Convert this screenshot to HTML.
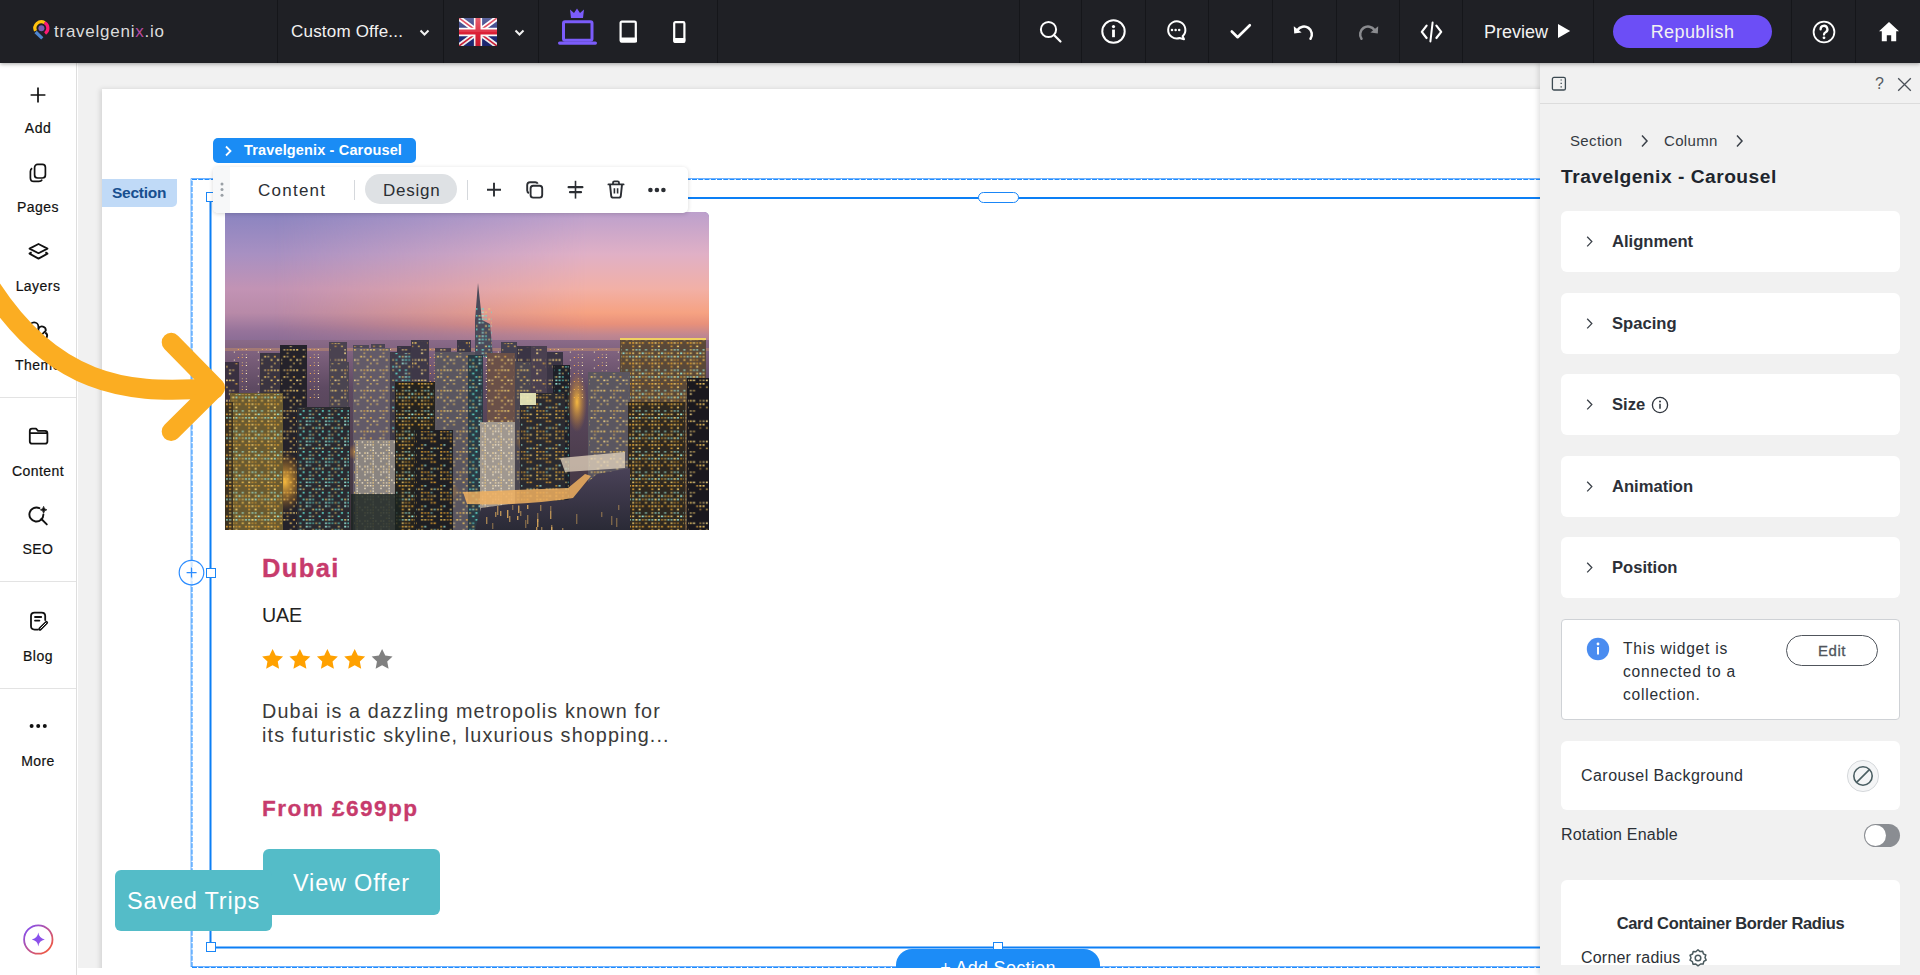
<!DOCTYPE html>
<html><head><meta charset="utf-8">
<style>
*{box-sizing:border-box;margin:0;padding:0}
html,body{width:1920px;height:975px;overflow:hidden;background:#fff;font-family:"Liberation Sans",sans-serif}
.a{position:absolute}
svg{display:block;overflow:visible}
/* topbar */
#top{left:0;top:0;width:1920px;height:63px;background:#1f2025;z-index:10;box-shadow:0 1px 4px rgba(0,0,0,.35)}
#top .sep{top:0;width:1px;height:63px;background:#15161a}
#top .t{color:#f2f2f2;white-space:nowrap}
/* sidebar */
#side{left:0;top:63px;width:77px;height:912px;background:#fff;border-right:1px solid #dedede;z-index:5}
#side .lbl{left:0;width:76px;text-align:center;font-size:14px;color:#111;line-height:16px;white-space:nowrap;letter-spacing:0.45px;-webkit-text-stroke:0.2px #111}
#side .hr{left:0;width:76px;height:1px;background:#e3e3e3}
/* canvas */
#canvas{left:78px;top:63px;width:1462px;height:905px;background:#f1f1f1;overflow:hidden}
#page{left:24px;top:26px;width:1500px;height:900px;background:#fff;box-shadow:-2px 0 5px rgba(0,0,0,.12)}
/* panel */
#panel{left:1540px;top:63px;width:380px;height:912px;background:#f1f1f1;box-shadow:-2px 0 5px rgba(0,0,0,.12);z-index:6}
.card{position:absolute;left:21px;width:339px;background:#fff;border-radius:6px}
.card .ttl{position:absolute;left:51px;font-size:16.6px;font-weight:bold;color:#2c3038;white-space:nowrap;margin-top:1px}
</style></head>
<body>
<!-- TOPBAR -->
<div id="top" class="a">
  <div class="a sep" style="left:277px"></div>
  <div class="a sep" style="left:443px"></div>
  <div class="a sep" style="left:538px"></div>
  <div class="a sep" style="left:717px"></div>
  <div class="a sep" style="left:1019px"></div>
  <div class="a sep" style="left:1081px"></div>
  <div class="a sep" style="left:1145px"></div>
  <div class="a sep" style="left:1208px"></div>
  <div class="a sep" style="left:1272px"></div>
  <div class="a sep" style="left:1336px"></div>
  <div class="a sep" style="left:1399px"></div>
  <div class="a sep" style="left:1462px"></div>
  <div class="a sep" style="left:1593px"></div>
  <div class="a sep" style="left:1791px"></div>
  <div class="a sep" style="left:1855px"></div>

  <svg class="a" style="left:28px;top:15px" width="30" height="30" viewBox="0 0 30 30">
    <path d="M7.5 15.9 A6.5 6.5 0 0 1 16.65 7.6" fill="none" stroke="#ffc20e" stroke-width="3.2"/>
    <path d="M16.65 7.6 A6.5 6.5 0 0 1 17.13 18.52" fill="none" stroke="#ff1a75" stroke-width="3.2"/>
    <path d="M7.6 17 L14.3 23.4" fill="none" stroke="#4f86d0" stroke-width="3.2"/>
    <circle cx="13.4" cy="13.2" r="3" fill="#7a5cb8"/>
  </svg>
  <div class="a t" style="left:54px;top:22px;font-size:17px;line-height:20px;letter-spacing:0.75px;color:#dcdcdc">travelgeni<span style="color:#b94aa0">x</span>.io</div>
  <div class="a t" style="left:291px;top:22px;font-size:17px;line-height:20px;letter-spacing:0.2px">Custom Offe...</div>
  <svg class="a" style="left:419px;top:29px" width="11" height="8" viewBox="0 0 11 8"><path d="M1.5 1.5 L5.5 5.5 L9.5 1.5" fill="none" stroke="#f2f2f2" stroke-width="2"/></svg>
  <svg class="a" style="left:459px;top:18px;overflow:hidden" width="38" height="28" viewBox="0 0 60 44" preserveAspectRatio="none">
    <defs><linearGradient id="fg" x1="0" y1="0" x2="0" y2="1"><stop offset="0" stop-color="#fff" stop-opacity=".28"/><stop offset=".5" stop-color="#fff" stop-opacity=".1"/><stop offset=".5" stop-color="#000" stop-opacity="0"/><stop offset="1" stop-color="#000" stop-opacity=".1"/></linearGradient></defs>
    <rect width="60" height="44" fill="#1f2a7a"/>
    <path d="M0 0 L60 44 M60 0 L0 44" stroke="#fff" stroke-width="8"/>
    <path d="M0 0 L60 44 M60 0 L0 44" stroke="#d9233c" stroke-width="2.6"/>
    <path d="M30 0 V44 M0 22 H60" stroke="#fff" stroke-width="13"/>
    <path d="M30 0 V44 M0 22 H60" stroke="#dd1f36" stroke-width="8"/>
    <rect width="60" height="44" fill="url(#fg)"/>
  </svg>
  <svg class="a" style="left:514px;top:29px" width="11" height="8" viewBox="0 0 11 8"><path d="M1.5 1.5 L5.5 5.5 L9.5 1.5" fill="none" stroke="#f2f2f2" stroke-width="2"/></svg>
  <!-- laptop -->
  <svg class="a" style="left:556px;top:8px" width="42" height="38" viewBox="0 0 42 38">
    <path d="M15 10 L14 1.5 L18 5 L21 0.5 L24 5 L28 1.5 L27 10 Z" fill="#7b5cfa"/>
    <rect x="7.5" y="13.8" width="28.5" height="18.5" rx="1.5" fill="none" stroke="#7b5cfa" stroke-width="3"/>
    <rect x="2" y="33.5" width="39" height="3.2" rx="1.6" fill="#7b5cfa"/>
  </svg>
  <!-- tablet -->
  <svg class="a" style="left:619px;top:20px" width="19" height="24" viewBox="0 0 19 24">
    <rect x="1.6" y="1.6" width="15.2" height="19.8" rx="1.2" fill="none" stroke="#fff" stroke-width="2.2"/>
    <rect x="1" y="17.5" width="17" height="5" rx="1" fill="#fff"/>
  </svg>
  <!-- phone -->
  <svg class="a" style="left:673px;top:21px" width="13" height="23" viewBox="0 0 13 23">
    <rect x="1.2" y="1.2" width="10.2" height="19.6" rx="1.2" fill="none" stroke="#fff" stroke-width="2.2"/>
    <rect x="0.5" y="17" width="11.8" height="4.8" rx="1" fill="#fff"/>
  </svg>
  <!-- search -->
  <svg class="a" style="left:1039px;top:20px" width="24" height="24" viewBox="0 0 24 24">
    <circle cx="9.5" cy="9.5" r="7.6" fill="none" stroke="#fff" stroke-width="2"/>
    <path d="M15 15 L21.5 21.5" stroke="#fff" stroke-width="2.2" stroke-linecap="round"/>
  </svg>
  <!-- info -->
  <svg class="a" style="left:1101px;top:19px" width="25" height="25" viewBox="0 0 25 25">
    <circle cx="12.5" cy="12.5" r="11.2" fill="none" stroke="#fff" stroke-width="2"/>
    <circle cx="12.5" cy="7.6" r="1.6" fill="#fff"/>
    <rect x="11.1" y="10.6" width="2.8" height="7.6" fill="#fff"/>
  </svg>
  <!-- comment -->
  <svg class="a" style="left:1165px;top:20px" width="22" height="22" viewBox="0 0 22 22">
    <path d="M17.6 16.2 A8.6 8.6 0 1 0 14.6 18 L19 19.2 Z" fill="none" stroke="#fff" stroke-width="2" stroke-linejoin="round"/>
    <circle cx="7" cy="10" r="1.25" fill="#fff"/><circle cx="10.6" cy="10" r="1.25" fill="#fff"/><circle cx="14.2" cy="10" r="1.25" fill="#fff"/>
  </svg>
  <!-- check -->
  <svg class="a" style="left:1230px;top:23px" width="22" height="17" viewBox="0 0 22 17">
    <path d="M1.8 8.5 L7.6 14.2 L19.8 2.2" fill="none" stroke="#fff" stroke-width="2.6" stroke-linecap="round" stroke-linejoin="round"/>
  </svg>
  <!-- undo -->
  <svg class="a" style="left:1293px;top:22px" width="22" height="19" viewBox="0 0 22 19">
    <path d="M4.5 8 A7.5 7.5 0 1 1 17.5 16.8" fill="none" stroke="#fff" stroke-width="2.5" stroke-linecap="round"/>
    <path d="M0.8 4.2 L1.2 11.6 L8.6 10.4 Z" fill="#fff"/>
  </svg>
  <!-- redo -->
  <svg class="a" style="left:1357px;top:22px" width="22" height="19" viewBox="0 0 22 19">
    <path d="M17.5 8 A7.5 7.5 0 1 0 4.5 16.8" fill="none" stroke="#8a8b8f" stroke-width="2.5" stroke-linecap="round"/>
    <path d="M21.2 4.2 L20.8 11.6 L13.4 10.4 Z" fill="#8a8b8f"/>
  </svg>
  <!-- code -->
  <svg class="a" style="left:1420px;top:21px" width="23" height="22" viewBox="0 0 23 22">
    <path d="M6.6 4.6 L1.8 10.8 L6.6 17" fill="none" stroke="#fff" stroke-width="2.2" stroke-linecap="round" stroke-linejoin="round"/>
    <path d="M16.4 4.6 L21.2 10.8 L16.4 17" fill="none" stroke="#fff" stroke-width="2.2" stroke-linecap="round" stroke-linejoin="round"/>
    <path d="M12.6 1.6 L10.4 20.4" stroke="#fff" stroke-width="2" stroke-linecap="round"/>
  </svg>
  <div class="a t" style="left:1484px;top:21px;font-size:18px;line-height:22px;letter-spacing:0px">Preview</div>
  <svg class="a" style="left:1557px;top:23px" width="14" height="16" viewBox="0 0 14 16"><path d="M1 1 L13.2 8 L1 15 Z" fill="#fff"/></svg>
  <div class="a" style="left:1613px;top:15px;width:159px;height:33px;border-radius:17px;background:#6c4ef6"></div>
  <div class="a t" style="left:1613px;top:21px;width:159px;text-align:center;font-size:18px;line-height:22px;letter-spacing:0.4px">Republish</div>
  <!-- help -->
  <svg class="a" style="left:1812px;top:20px" width="24" height="24" viewBox="0 0 24 24">
    <circle cx="12" cy="12" r="10.4" fill="none" stroke="#fff" stroke-width="1.8"/>
    <path d="M8.6 9.4 A3.4 3.4 0 1 1 13.6 12.2 Q12 13 12 14.6" fill="none" stroke="#fff" stroke-width="2.3" stroke-linecap="round"/>
    <circle cx="12" cy="17.8" r="1.4" fill="#fff"/>
  </svg>
  <!-- home -->
  <svg class="a" style="left:1878px;top:21px" width="22" height="21" viewBox="0 0 22 21">
    <path d="M11 1 L21 10.2 L18.2 10.2 L18.2 20.2 L13.2 20.2 L13.2 14.2 L8.8 14.2 L8.8 20.2 L3.8 20.2 L3.8 10.2 L1 10.2 Z" fill="#fff"/>
  </svg>
</div>

<!-- SIDEBAR -->
<div id="side" class="a">

  <svg class="a" style="left:30px;top:24px" width="16" height="16" viewBox="0 0 16 16"><path d="M8 0.6 V15.4 M0.6 8 H15.4" stroke="#111" stroke-width="1.7"/></svg>
  <div class="a lbl" style="top:57px">Add</div>
  <svg class="a" style="left:29px;top:100px" width="19" height="20" viewBox="0 0 19 20">
    <rect x="5.6" y="1.4" width="10.8" height="13.6" rx="3" fill="none" stroke="#111" stroke-width="1.7"/>
    <path d="M3.2 5.2 Q1.4 6 1.4 8.4 V15 Q1.4 18.4 4.8 18.4 H9.8 Q12.2 18.4 13.2 16.6" fill="none" stroke="#111" stroke-width="1.7"/>
  </svg>
  <div class="a lbl" style="top:136px">Pages</div>
  <svg class="a" style="left:28px;top:180px" width="21" height="17" viewBox="0 0 21 17">
    <path d="M10.5 1 L19.5 5.6 L10.5 10.2 L1.5 5.6 Z" fill="none" stroke="#111" stroke-width="1.8" stroke-linejoin="round"/>
    <path d="M3.6 9.2 L1.5 10.6 L10.5 15.6 L19.5 10.6 L17.4 9.2" fill="none" stroke="#111" stroke-width="1.8" stroke-linejoin="round"/>
  </svg>
  <div class="a lbl" style="top:215px">Layers</div>
  <svg class="a" style="left:28px;top:258px" width="22" height="22" viewBox="0 0 22 22">
    <path d="M1.8 14 V5.6 A4.3 4.3 0 0 1 10.4 5.6 V14.4" fill="none" stroke="#111" stroke-width="1.8"/>
    <path d="M10.4 7.6 A3.9 3.9 0 0 1 17.8 9.6 L11 16.4" fill="none" stroke="#111" stroke-width="1.8" stroke-linejoin="round"/>
    <path d="M17.2 11.6 A3.6 3.6 0 0 1 14.4 18.2 L12.4 17" fill="none" stroke="#111" stroke-width="1.8"/>
  </svg>
  <div class="a lbl" style="top:294px">Theme</div>
  <div class="a hr" style="top:334px"></div>
  <svg class="a" style="left:28px;top:364px" width="21" height="18" viewBox="0 0 21 18">
    <path d="M1.8 4 Q1.8 1.6 4 1.6 H8 L10 3.8 H17 Q19.4 3.8 19.4 6.2 V14.4 Q19.4 16.6 17 16.6 H4.2 Q1.8 16.6 1.8 14.4 Z M1.8 6.2 H19.4" fill="none" stroke="#111" stroke-width="1.8" stroke-linejoin="round"/>
  </svg>
  <div class="a lbl" style="top:400px">Content</div>
  <svg class="a" style="left:28px;top:442px" width="21" height="21" viewBox="0 0 21 21">
    <path d="M11.4 3.2 A7 7 0 1 0 15.4 9.4" fill="none" stroke="#111" stroke-width="1.9" stroke-linecap="round"/>
    <path d="M13.4 14 L18.8 19.4" stroke="#111" stroke-width="1.9" stroke-linecap="round"/>
    <path d="M15.6 1.4 Q16 4.4 18.8 4.8 Q16 5.2 15.6 8.2 Q15.2 5.2 12.4 4.8 Q15.2 4.4 15.6 1.4 Z" fill="#111" stroke="#111" stroke-width="0.8" stroke-linejoin="round"/>
  </svg>
  <div class="a lbl" style="top:478px">SEO</div>
  <div class="a hr" style="top:518px"></div>
  <svg class="a" style="left:29px;top:548px" width="20" height="20" viewBox="0 0 20 20">
    <path d="M9 18.6 H5.6 Q2 18.6 2 15 V5 Q2 1.6 5.6 1.6 H12.6 Q16.2 1.6 16.2 5 V9" fill="none" stroke="#111" stroke-width="1.8" stroke-linecap="round"/>
    <path d="M6 6 H12.2 M6 9.6 H10.4" stroke="#111" stroke-width="1.8" stroke-linecap="round"/>
    <path d="M11 18 L17.4 11.6" stroke="#111" stroke-width="3.4" stroke-linecap="round"/>
    <path d="M11.6 17.4 L17 12" stroke="#fff" stroke-width="1" stroke-linecap="round"/>
  </svg>
  <div class="a lbl" style="top:585px">Blog</div>
  <div class="a hr" style="top:625px"></div>
  <svg class="a" style="left:29px;top:660px" width="19" height="6" viewBox="0 0 19 6"><circle cx="2.6" cy="3" r="2" fill="#111"/><circle cx="9.2" cy="3" r="2" fill="#111"/><circle cx="15.8" cy="3" r="2" fill="#111"/></svg>
  <div class="a lbl" style="top:690px">More</div>
  <svg class="a" style="left:22px;top:860px" width="33" height="33" viewBox="0 0 33 33">
    <defs><linearGradient id="aig" x1="0" y1="0" x2="1" y2="1"><stop offset="0" stop-color="#7a4dff"/><stop offset="1" stop-color="#ff5a2a"/></linearGradient>
    <linearGradient id="aig2" x1="0" y1="0" x2="1" y2="1"><stop offset="0" stop-color="#7b4cf5"/><stop offset="1" stop-color="#9a55e0"/></linearGradient></defs>
    <circle cx="16.3" cy="16.5" r="14.2" fill="none" stroke="url(#aig)" stroke-width="1.8"/>
    <path d="M16.3 9.6 Q17 15.2 22.8 16.5 Q17 17.8 16.3 23.4 Q15.6 17.8 9.8 16.5 Q15.6 15.2 16.3 9.6 Z" fill="url(#aig2)"/>
  </svg>
</div>

<!-- CANVAS -->
<div id="canvas" class="a">
  <div id="page" class="a"></div>
</div>
<div class="a" style="left:78px;top:968px;width:1462px;height:7px;background:#fff"></div>


<!-- CANVAS OVERLAY -->
<div class="a" id="cvo" style="left:0;top:0;width:1920px;height:975px;clip-path:inset(63px 380px 7px 78px);z-index:3">
  <!-- section label -->
  <div class="a" style="left:102px;top:179px;width:75px;height:28px;background:#c0daf7;border-radius:0 0 5px 0"></div>
  <div class="a" style="left:112px;top:184px;font-size:15.5px;line-height:18px;font-weight:bold;color:#174f8f;letter-spacing:-0.25px">Section</div>
  <!-- dashed outer rect -->
  <svg class="a" style="left:0;top:0" width="1920" height="975">
    <path d="M191 967 V178.5 H1600 M191 966.5 H1600" fill="none" stroke="#6fb2ff" stroke-width="1"/>
    <path d="M192 967 V179.5 H1600 M192 967.5 H1600" fill="none" stroke="#1f8cff" stroke-width="1" stroke-dasharray="5 1.25"/>
    <path d="M210.5 947.6 V197.9 H1600 M210.5 947.6 H1600" fill="none" stroke="#0c7ff5" stroke-width="2"/>
  </svg>
  <!-- blue tag -->
  <div class="a" style="left:213px;top:138px;width:203px;height:25px;background:#1a8cf5;border-radius:5px"></div>
  <svg class="a" style="left:224px;top:145px" width="9" height="12" viewBox="0 0 9 12"><path d="M2 1.5 L6.5 6 L2 10.5" fill="none" stroke="#fff" stroke-width="1.8"/></svg>
  <div class="a" style="left:244px;top:141px;font-size:14.5px;line-height:18px;font-weight:bold;color:#fff;letter-spacing:0.15px;white-space:nowrap">Travelgenix - Carousel</div>
  <!-- image -->
  <div class="a" id="img" style="left:225px;top:212px;width:484px;height:318px;overflow:hidden;border-radius:0 5px 0 0"><svg width="484" height="318" viewBox="0 0 484 318" style="display:block"><defs><linearGradient id="skyL" x1="0" y1="0" x2="0" y2="1">
<stop offset="0" stop-color="#8a84c0"/><stop offset="0.3" stop-color="#a890c2"/><stop offset="0.55" stop-color="#c293b4"/><stop offset="0.72" stop-color="#b88aa8"/><stop offset="0.85" stop-color="#96739a"/><stop offset="1" stop-color="#7e6690"/></linearGradient>
<linearGradient id="skyR" x1="0" y1="0" x2="0" y2="1">
<stop offset="0" stop-color="#bca0cc"/><stop offset="0.3" stop-color="#e0b0c6"/><stop offset="0.55" stop-color="#f2b0a6"/><stop offset="0.72" stop-color="#f6a282"/><stop offset="0.8" stop-color="#e8907a"/><stop offset="0.88" stop-color="#c08690"/><stop offset="1" stop-color="#a07890"/></linearGradient>
<linearGradient id="hmask" x1="0" y1="0" x2="1" y2="0"><stop offset="0.1" stop-color="#fff" stop-opacity="0"/><stop offset="0.75" stop-color="#fff" stop-opacity="1"/></linearGradient>
<mask id="skymask"><rect width="484" height="140" fill="url(#hmask)"/></mask>
<linearGradient id="haze" x1="0" y1="0" x2="0" y2="1"><stop offset="0" stop-color="#8a6a88"/><stop offset="0.25" stop-color="#5e4a62"/><stop offset="1" stop-color="#3a3038"/></linearGradient>
<linearGradient id="water" x1="0" y1="0" x2="0" y2="1"><stop offset="0" stop-color="#4a4258"/><stop offset="1" stop-color="#2a2a36"/></linearGradient>
<radialGradient id="street" cx="0.5" cy="0.5" r="0.5"><stop offset="0" stop-color="#ffc040" stop-opacity="0.95"/><stop offset="1" stop-color="#d08020" stop-opacity="0"/></radialGradient><pattern id="pA" width="19.2" height="20.4" patternUnits="userSpaceOnUse"><rect x="0.8" y="4.4" width="2" height="1.6" fill="#f5d888" opacity="0.90"/><rect x="4.0" y="4.4" width="2" height="1.6" fill="#e8c060" opacity="0.96"/><rect x="7.2" y="4.4" width="2" height="1.6" fill="#f5d888" opacity="0.94"/><rect x="13.6" y="4.4" width="2" height="1.6" fill="#e8c060" opacity="0.56"/><rect x="16.8" y="4.4" width="2" height="1.6" fill="#f5d888" opacity="0.63"/><rect x="10.4" y="7.8" width="2" height="1.6" fill="#d8a040" opacity="0.83"/><rect x="13.6" y="7.8" width="2" height="1.6" fill="#e8c060" opacity="0.99"/><rect x="16.8" y="7.8" width="2" height="1.6" fill="#e8c060" opacity="0.98"/><rect x="0.8" y="11.2" width="2" height="1.6" fill="#e8c060" opacity="0.68"/><rect x="13.6" y="11.2" width="2" height="1.6" fill="#d8a040" opacity="0.64"/><rect x="4.0" y="14.6" width="2" height="1.6" fill="#f5d888" opacity="0.62"/><rect x="7.2" y="14.6" width="2" height="1.6" fill="#e8c060" opacity="0.70"/><rect x="4.0" y="18.0" width="2" height="1.6" fill="#f5d888" opacity="0.92"/></pattern><pattern id="pB" width="19.2" height="20.4" patternUnits="userSpaceOnUse"><rect x="0.8" y="1.0" width="2" height="1.6" fill="#e8c060" opacity="0.98"/><rect x="4.0" y="1.0" width="2" height="1.6" fill="#f5d888" opacity="0.56"/><rect x="10.4" y="1.0" width="2" height="1.6" fill="#d8a040" opacity="0.93"/><rect x="7.2" y="4.4" width="2" height="1.6" fill="#e8c060" opacity="0.97"/><rect x="13.6" y="4.4" width="2" height="1.6" fill="#f5d888" opacity="0.95"/><rect x="16.8" y="4.4" width="2" height="1.6" fill="#f5d888" opacity="0.60"/><rect x="10.4" y="7.8" width="2" height="1.6" fill="#e8c060" opacity="0.64"/><rect x="16.8" y="7.8" width="2" height="1.6" fill="#e8c060" opacity="0.70"/><rect x="7.2" y="11.2" width="2" height="1.6" fill="#f5d888" opacity="0.69"/><rect x="0.8" y="14.6" width="2" height="1.6" fill="#f5d888" opacity="0.62"/><rect x="4.0" y="14.6" width="2" height="1.6" fill="#d8a040" opacity="0.79"/><rect x="7.2" y="14.6" width="2" height="1.6" fill="#e8c060" opacity="0.88"/><rect x="10.4" y="14.6" width="2" height="1.6" fill="#f5d888" opacity="0.76"/><rect x="13.6" y="14.6" width="2" height="1.6" fill="#e8c060" opacity="0.99"/><rect x="4.0" y="18.0" width="2" height="1.6" fill="#e8c060" opacity="0.61"/></pattern><pattern id="pC" width="19.2" height="20.4" patternUnits="userSpaceOnUse"><rect x="0.8" y="1.0" width="2" height="1.6" fill="#a0f0e0" opacity="0.72"/><rect x="4.0" y="1.0" width="2" height="1.6" fill="#a0f0e0" opacity="0.68"/><rect x="7.2" y="1.0" width="2" height="1.6" fill="#ffd870" opacity="0.99"/><rect x="10.4" y="1.0" width="2" height="1.6" fill="#a0f0e0" opacity="0.86"/><rect x="13.6" y="1.0" width="2" height="1.6" fill="#e0a030" opacity="0.68"/><rect x="16.8" y="1.0" width="2" height="1.6" fill="#ffd870" opacity="0.60"/><rect x="4.0" y="4.4" width="2" height="1.6" fill="#ffd870" opacity="0.83"/><rect x="7.2" y="4.4" width="2" height="1.6" fill="#e0a030" opacity="0.63"/><rect x="10.4" y="4.4" width="2" height="1.6" fill="#e0a030" opacity="0.58"/><rect x="16.8" y="4.4" width="2" height="1.6" fill="#f0c050" opacity="0.89"/><rect x="0.8" y="7.8" width="2" height="1.6" fill="#e0a030" opacity="0.93"/><rect x="4.0" y="7.8" width="2" height="1.6" fill="#e0a030" opacity="0.98"/><rect x="7.2" y="7.8" width="2" height="1.6" fill="#ffd870" opacity="0.81"/><rect x="10.4" y="7.8" width="2" height="1.6" fill="#e0a030" opacity="0.70"/><rect x="13.6" y="7.8" width="2" height="1.6" fill="#e0a030" opacity="0.92"/><rect x="4.0" y="11.2" width="2" height="1.6" fill="#e0a030" opacity="0.88"/><rect x="10.4" y="11.2" width="2" height="1.6" fill="#ffd870" opacity="0.94"/><rect x="4.0" y="14.6" width="2" height="1.6" fill="#ffd870" opacity="0.64"/><rect x="7.2" y="14.6" width="2" height="1.6" fill="#a0f0e0" opacity="0.68"/><rect x="10.4" y="14.6" width="2" height="1.6" fill="#a0f0e0" opacity="0.63"/><rect x="16.8" y="14.6" width="2" height="1.6" fill="#a0f0e0" opacity="0.69"/><rect x="0.8" y="18.0" width="2" height="1.6" fill="#e0a030" opacity="0.87"/><rect x="4.0" y="18.0" width="2" height="1.6" fill="#ffd870" opacity="0.81"/><rect x="10.4" y="18.0" width="2" height="1.6" fill="#ffd870" opacity="0.83"/><rect x="13.6" y="18.0" width="2" height="1.6" fill="#a0f0e0" opacity="0.99"/><rect x="16.8" y="18.0" width="2" height="1.6" fill="#ffd870" opacity="0.60"/></pattern><pattern id="pD" width="19.2" height="20.4" patternUnits="userSpaceOnUse"><rect x="4.0" y="1.0" width="2" height="1.6" fill="#f0c050" opacity="0.74"/><rect x="7.2" y="1.0" width="2" height="1.6" fill="#f0c050" opacity="0.82"/><rect x="10.4" y="1.0" width="2" height="1.6" fill="#e0a030" opacity="0.55"/><rect x="13.6" y="1.0" width="2" height="1.6" fill="#e0a030" opacity="0.94"/><rect x="13.6" y="4.4" width="2" height="1.6" fill="#e0a030" opacity="0.80"/><rect x="16.8" y="4.4" width="2" height="1.6" fill="#e0a030" opacity="0.98"/><rect x="4.0" y="7.8" width="2" height="1.6" fill="#e0a030" opacity="0.76"/><rect x="7.2" y="7.8" width="2" height="1.6" fill="#a0f0e0" opacity="0.80"/><rect x="0.8" y="11.2" width="2" height="1.6" fill="#f0c050" opacity="0.72"/><rect x="4.0" y="11.2" width="2" height="1.6" fill="#ffd870" opacity="0.70"/><rect x="13.6" y="11.2" width="2" height="1.6" fill="#ffd870" opacity="0.77"/><rect x="16.8" y="11.2" width="2" height="1.6" fill="#a0f0e0" opacity="0.72"/><rect x="4.0" y="14.6" width="2" height="1.6" fill="#e0a030" opacity="0.88"/><rect x="7.2" y="14.6" width="2" height="1.6" fill="#e0a030" opacity="0.74"/><rect x="10.4" y="14.6" width="2" height="1.6" fill="#e0a030" opacity="0.77"/><rect x="13.6" y="14.6" width="2" height="1.6" fill="#a0f0e0" opacity="0.56"/><rect x="4.0" y="18.0" width="2" height="1.6" fill="#f0c050" opacity="0.90"/><rect x="10.4" y="18.0" width="2" height="1.6" fill="#e0a030" opacity="0.66"/><rect x="13.6" y="18.0" width="2" height="1.6" fill="#f0c050" opacity="0.66"/><rect x="16.8" y="18.0" width="2" height="1.6" fill="#ffd870" opacity="0.87"/></pattern><pattern id="pE" width="16" height="13.6" patternUnits="userSpaceOnUse"><rect x="0.8" y="1.0" width="1.6" height="1.4" fill="#fff0d0" opacity="0.82"/><rect x="3.4" y="1.0" width="1.6" height="1.4" fill="#e0c080" opacity="0.94"/><rect x="11.2" y="1.0" width="1.6" height="1.4" fill="#ffe0a0" opacity="0.69"/><rect x="13.8" y="1.0" width="1.6" height="1.4" fill="#fff0d0" opacity="0.83"/><rect x="3.4" y="3.7" width="1.6" height="1.4" fill="#fff0d0" opacity="0.71"/><rect x="11.2" y="3.7" width="1.6" height="1.4" fill="#fff0d0" opacity="0.80"/><rect x="0.8" y="6.4" width="1.6" height="1.4" fill="#e0c080" opacity="0.80"/><rect x="3.4" y="6.4" width="1.6" height="1.4" fill="#fff0d0" opacity="0.82"/><rect x="3.4" y="9.1" width="1.6" height="1.4" fill="#e0c080" opacity="0.93"/><rect x="6.0" y="9.1" width="1.6" height="1.4" fill="#fff0d0" opacity="0.76"/><rect x="11.2" y="9.1" width="1.6" height="1.4" fill="#ffe0a0" opacity="0.86"/><rect x="13.8" y="9.1" width="1.6" height="1.4" fill="#fff0d0" opacity="0.84"/><rect x="0.8" y="11.8" width="1.6" height="1.4" fill="#fff0d0" opacity="0.61"/><rect x="3.4" y="11.8" width="1.6" height="1.4" fill="#e0c080" opacity="0.95"/><rect x="8.6" y="11.8" width="1.6" height="1.4" fill="#fff0d0" opacity="0.81"/><rect x="13.8" y="11.8" width="1.6" height="1.4" fill="#ffe0a0" opacity="0.67"/></pattern><pattern id="pT" width="19.2" height="20.4" patternUnits="userSpaceOnUse"><rect x="0.8" y="1.0" width="2" height="1.6" fill="#60e0d0" opacity="0.85"/><rect x="4.0" y="1.0" width="2" height="1.6" fill="#f0d070" opacity="0.74"/><rect x="7.2" y="1.0" width="2" height="1.6" fill="#a0f0e0" opacity="0.87"/><rect x="10.4" y="1.0" width="2" height="1.6" fill="#60e0d0" opacity="0.65"/><rect x="4.0" y="4.4" width="2" height="1.6" fill="#a0f0e0" opacity="0.87"/><rect x="7.2" y="4.4" width="2" height="1.6" fill="#60e0d0" opacity="0.82"/><rect x="10.4" y="4.4" width="2" height="1.6" fill="#60e0d0" opacity="0.58"/><rect x="13.6" y="4.4" width="2" height="1.6" fill="#f0d070" opacity="0.60"/><rect x="16.8" y="4.4" width="2" height="1.6" fill="#60e0d0" opacity="0.68"/><rect x="4.0" y="7.8" width="2" height="1.6" fill="#a0f0e0" opacity="0.95"/><rect x="7.2" y="7.8" width="2" height="1.6" fill="#a0f0e0" opacity="0.59"/><rect x="16.8" y="7.8" width="2" height="1.6" fill="#f0d070" opacity="0.72"/><rect x="0.8" y="11.2" width="2" height="1.6" fill="#f0d070" opacity="0.68"/><rect x="10.4" y="11.2" width="2" height="1.6" fill="#f0d070" opacity="0.80"/><rect x="13.6" y="11.2" width="2" height="1.6" fill="#60e0d0" opacity="0.80"/><rect x="16.8" y="11.2" width="2" height="1.6" fill="#a0f0e0" opacity="0.78"/><rect x="0.8" y="14.6" width="2" height="1.6" fill="#60e0d0" opacity="0.94"/><rect x="7.2" y="14.6" width="2" height="1.6" fill="#60e0d0" opacity="0.87"/><rect x="13.6" y="14.6" width="2" height="1.6" fill="#f0d070" opacity="0.57"/><rect x="7.2" y="18.0" width="2" height="1.6" fill="#a0f0e0" opacity="0.77"/><rect x="10.4" y="18.0" width="2" height="1.6" fill="#f0d070" opacity="0.56"/><rect x="16.8" y="18.0" width="2" height="1.6" fill="#60e0d0" opacity="0.98"/></pattern><pattern id="pDist" width="24" height="8" patternUnits="userSpaceOnUse"><rect x="12.8" y="1.0" width="1.2" height="1" fill="#ffb050" opacity="0.92"/><rect x="16.8" y="1.0" width="1.2" height="1" fill="#ffb050" opacity="0.71"/><rect x="20.8" y="1.0" width="1.2" height="1" fill="#fff0c0" opacity="0.97"/><rect x="8.8" y="3.6" width="1.2" height="1" fill="#fff0c0" opacity="0.84"/><rect x="16.8" y="6.2" width="1.2" height="1" fill="#f5d27a" opacity="0.57"/><rect x="20.8" y="6.2" width="1.2" height="1" fill="#ffe39a" opacity="0.57"/></pattern></defs><rect width="484" height="140" fill="url(#skyL)"/><rect width="484" height="140" fill="url(#skyR)" mask="url(#skymask)"/><rect y="128" width="484" height="190" fill="url(#haze)"/><rect y="136" width="484" height="50" fill="url(#pDist)"/><rect x="0" y="136" width="484" height="3" fill="#e0a060" opacity="0.35"/><rect x="104" y="130" width="18" height="188" fill="#4a4250"/><rect x="105" y="131" width="16" height="187" fill="url(#pA)"/><rect x="128" y="133" width="16" height="185" fill="#4e4858"/><rect x="129" y="134" width="14" height="184" fill="url(#pA)"/><rect x="146" y="132" width="14" height="186" fill="#4a4454"/><rect x="147" y="133" width="12" height="185" fill="url(#pA)"/><rect x="172" y="134" width="14" height="184" fill="#3a3444"/><rect x="173" y="135" width="12" height="183" fill="url(#pA)"/><rect x="186" y="128" width="18" height="190" fill="#3e3848"/><rect x="187" y="129" width="16" height="189" fill="url(#pA)"/><rect x="210" y="136" width="16" height="182" fill="#4a4050"/><rect x="211" y="137" width="14" height="181" fill="url(#pA)"/><rect x="232" y="128" width="14" height="190" fill="#3a3646"/><rect x="233" y="129" width="12" height="189" fill="url(#pA)"/><rect x="276" y="130" width="16" height="188" fill="#444050"/><rect x="277" y="131" width="14" height="187" fill="url(#pA)"/><rect x="292" y="134" width="14" height="184" fill="#3a3444"/><rect x="293" y="135" width="12" height="183" fill="url(#pA)"/><rect x="306" y="134" width="16" height="184" fill="#4a4050"/><rect x="307" y="135" width="14" height="183" fill="url(#pA)"/><rect x="322" y="140" width="16" height="178" fill="#3a3444"/><rect x="323" y="141" width="14" height="177" fill="url(#pA)"/><rect x="395" y="126" width="86" height="192" fill="#5a4838"/><rect x="396" y="127" width="84" height="191" fill="url(#pC)"/><rect x="395" y="126" width="86" height="2" fill="#f0d060"/><path d="M253 71 L257 108 L265 112 L268 145 L250 145 L250 108 Z" fill="#4a4a5a"/><rect x="251" y="96" width="16" height="49" fill="url(#pT)"/><rect x="0" y="150" width="14" height="168" fill="#3a3040"/><rect x="1" y="151" width="12" height="167" fill="url(#pA)"/><rect x="35" y="141" width="24" height="177" fill="#3a3440"/><rect x="36" y="142" width="22" height="176" fill="url(#pB)"/><rect x="55" y="133" width="27" height="185" fill="#24222a"/><rect x="56" y="134" width="25" height="184" fill="url(#pB)"/><rect x="104" y="150" width="20" height="168" fill="#4a4450"/><rect x="105" y="151" width="18" height="167" fill="url(#pB)"/><rect x="128" y="136" width="37" height="182" fill="#625a68"/><rect x="129" y="137" width="35" height="181" fill="url(#pB)"/><rect x="165" y="140" width="22" height="178" fill="#3e3a48"/><rect x="166" y="141" width="20" height="177" fill="url(#pT)"/><rect x="210" y="140" width="40" height="178" fill="#5a5660"/><rect x="211" y="141" width="38" height="177" fill="url(#pB)"/><rect x="243" y="143" width="15" height="175" fill="#2a3a44"/><rect x="244" y="144" width="13" height="174" fill="url(#pT)"/><rect x="262" y="141" width="28" height="177" fill="#6a5048"/><rect x="263" y="142" width="26" height="176" fill="url(#pB)"/><rect x="290" y="150" width="16" height="168" fill="#4a4650"/><rect x="291" y="151" width="14" height="167" fill="url(#pB)"/><rect x="328" y="153" width="17" height="165" fill="#1e2028"/><rect x="329" y="154" width="15" height="164" fill="url(#pT)"/><rect x="363" y="160" width="42" height="158" fill="#5a5660"/><rect x="364" y="161" width="40" height="157" fill="url(#pB)"/><ellipse cx="60" cy="270" rx="20" ry="30" fill="url(#street)"/><ellipse cx="352" cy="190" rx="10" ry="30" fill="url(#street)"/><ellipse cx="140" cy="240" rx="20" ry="10" fill="url(#street)"/><ellipse cx="215" cy="280" rx="20" ry="12" fill="url(#street)"/><ellipse cx="305" cy="230" rx="15" ry="10" fill="url(#street)"/><rect x="72" y="195" width="53" height="123" fill="#2a2a30"/><rect x="73" y="196" width="51" height="122" fill="url(#pT)"/><rect x="5" y="181" width="53" height="137" fill="#6a5a30"/><rect x="6" y="182" width="51" height="136" fill="url(#pC)"/><rect x="0" y="190" width="8" height="128" fill="#3a3020"/><rect x="1" y="191" width="6" height="127" fill="url(#pC)"/><rect x="130" y="228" width="45" height="90" fill="#8a8480"/><rect x="131" y="229" width="43" height="89" fill="url(#pE)"/><rect x="170" y="170" width="40" height="148" fill="#24221e"/><rect x="171" y="171" width="38" height="147" fill="url(#pC)"/><rect x="190" y="218" width="38" height="100" fill="#1e1e22"/><rect x="191" y="219" width="36" height="99" fill="url(#pD)"/><rect x="255" y="210" width="35" height="108" fill="#a09890"/><rect x="256" y="211" width="33" height="107" fill="url(#pE)"/><rect x="295" y="181" width="45" height="137" fill="#2a2a30"/><rect x="296" y="182" width="43" height="136" fill="url(#pD)"/><rect x="403" y="190" width="57" height="128" fill="#2e2820"/><rect x="404" y="191" width="55" height="127" fill="url(#pC)"/><rect x="462" y="166" width="22" height="152" fill="#1a181e"/><rect x="463" y="167" width="20" height="151" fill="url(#pA)"/><rect x="295" y="181" width="16" height="12" fill="#f0f0c0" opacity="0.9"/><path d="M250 318 L256 296 L300 290 L343 288 L372 262 L405 256 L405 318 Z" fill="url(#water)"/><rect x="386" y="304" width="1.4" height="9" fill="#f0b860" opacity="0.4"/><rect x="326" y="313" width="1.4" height="8" fill="#f0b860" opacity="0.5"/><rect x="325" y="294" width="1.4" height="5" fill="#f0b860" opacity="0.4"/><rect x="312" y="301" width="1.4" height="9" fill="#f0b860" opacity="0.4"/><rect x="295" y="299" width="1.4" height="5" fill="#f0b860" opacity="0.5"/><rect x="292" y="304" width="1.4" height="4" fill="#f0b860" opacity="0.8"/><rect x="311" y="315" width="1.4" height="8" fill="#f0b860" opacity="0.7"/><rect x="326" y="315" width="1.4" height="5" fill="#f0b860" opacity="0.7"/><rect x="300" y="308" width="1.4" height="8" fill="#f0b860" opacity="0.4"/><rect x="287" y="293" width="1.4" height="5" fill="#f0b860" opacity="0.4"/><rect x="316" y="315" width="1.4" height="6" fill="#f0b860" opacity="0.5"/><rect x="325" y="299" width="1.4" height="8" fill="#f0b860" opacity="0.7"/><rect x="282" y="298" width="1.4" height="8" fill="#f0b860" opacity="0.8"/><rect x="351" y="302" width="1.4" height="10" fill="#f0b860" opacity="0.4"/><rect x="267" y="311" width="1.4" height="6" fill="#f0b860" opacity="0.4"/><rect x="337" y="316" width="1.4" height="7" fill="#f0b860" opacity="0.5"/><rect x="272" y="294" width="1.4" height="9" fill="#f0b860" opacity="0.6"/><rect x="393" y="293" width="1.4" height="5" fill="#f0b860" opacity="0.4"/><rect x="315" y="293" width="1.4" height="6" fill="#f0b860" opacity="0.5"/><rect x="302" y="293" width="1.4" height="4" fill="#f0b860" opacity="0.8"/><rect x="284" y="304" width="1.4" height="6" fill="#f0b860" opacity="0.6"/><rect x="270" y="300" width="1.4" height="5" fill="#f0b860" opacity="0.6"/><rect x="391" y="306" width="1.4" height="9" fill="#f0b860" opacity="0.4"/><rect x="261" y="305" width="1.4" height="7" fill="#f0b860" opacity="0.6"/><rect x="312" y="307" width="1.4" height="8" fill="#f0b860" opacity="0.8"/><rect x="302" y="303" width="1.4" height="9" fill="#f0b860" opacity="0.5"/><rect x="275" y="299" width="1.4" height="5" fill="#f0b860" opacity="0.7"/><rect x="376" y="300" width="1.4" height="5" fill="#f0b860" opacity="0.4"/><rect x="293" y="294" width="1.4" height="7" fill="#f0b860" opacity="0.6"/><rect x="293" y="293" width="1.4" height="8" fill="#f0b860" opacity="0.4"/><path d="M238 280 L343 276 L360 262 L366 264 L348 286 Q300 294 242 292 Z" fill="#f0b060" opacity="0.85"/><path d="M335 246 L400 240 L400 256 L340 260 Z" fill="#e8d8c0" opacity="0.75"/><rect x="126" y="282" width="50" height="36" fill="#1a2420" opacity="0.8"/></svg></div>
  <!-- handles -->
  <div class="a" style="left:206px;top:192px;width:10px;height:10px;border:1.5px solid #1a86f7;background:#fff"></div>
  <div class="a" style="left:978px;top:192px;width:41px;height:11px;border:1.5px solid #1a86f7;background:#fff;border-radius:6px"></div>
  <div class="a" style="left:206px;top:568px;width:10px;height:10px;border:1.5px solid #1a86f7;background:#fff"></div>
  <div class="a" style="left:206px;top:942px;width:10px;height:10px;border:1.5px solid #1a86f7;background:#fff"></div>
  <svg class="a" style="left:178px;top:559px" width="27" height="27" viewBox="0 0 27 27">
    <circle cx="13.5" cy="13.6" r="12.3" fill="rgba(255,255,255,.7)" stroke="#2b8cff" stroke-width="1.2"/>
    <path d="M8.6 13.6 H18.6 M13.5 8.6 V18.6" stroke="#2b8cff" stroke-width="1.2"/>
  </svg>
  <!-- toolbar -->
  <div class="a" style="left:213px;top:167px;width:475px;height:46px;background:#fff;border-radius:5px;box-shadow:0 1px 4px rgba(0,0,0,.16)"></div>
  <div class="a" style="left:213px;top:167px;width:17px;height:46px;background:#f7f8f9;border-radius:5px 0 0 5px"></div>
  <svg class="a" style="left:219px;top:181px" width="6" height="17" viewBox="0 0 6 17"><circle cx="3" cy="3" r="1.5" fill="#9aa0a6"/><circle cx="3" cy="8.6" r="1.5" fill="#9aa0a6"/><circle cx="3" cy="14.2" r="1.5" fill="#9aa0a6"/></svg>
  <div class="a" style="left:258px;top:181px;font-size:17px;line-height:20px;color:#2b2e33;letter-spacing:1.25px">Content</div>
  <div class="a" style="left:354px;top:180px;width:1px;height:20px;background:#d5d8dc"></div>
  <div class="a" style="left:365px;top:174px;width:92px;height:30px;background:#dee1e4;border-radius:15px"></div>
  <div class="a" style="left:383px;top:181px;font-size:17px;line-height:20px;color:#2b2e33;letter-spacing:0.75px">Design</div>
  <div class="a" style="left:467px;top:180px;width:1px;height:20px;background:#d5d8dc"></div>
  <svg class="a" style="left:486px;top:182px" width="16" height="16" viewBox="0 0 16 16"><path d="M8 0.8 V14.6 M1 7.7 H15" stroke="#2b2e33" stroke-width="1.9"/></svg>
  <svg class="a" style="left:526px;top:181px" width="18" height="18" viewBox="0 0 18 18">
    <rect x="4.6" y="4.8" width="11.6" height="11.8" rx="2.6" fill="none" stroke="#2b2e33" stroke-width="1.9"/>
    <path d="M11.8 2.6 Q11 1.2 9.2 1.2 H4 Q1.2 1.2 1.2 4 V9.4 Q1.2 11.4 3 12" fill="none" stroke="#2b2e33" stroke-width="1.9"/>
  </svg>
  <svg class="a" style="left:567px;top:180px" width="17" height="20" viewBox="0 0 17 20">
    <path d="M8.5 0.8 V18.6" stroke="#2b2e33" stroke-width="1.6"/>
    <path d="M1.6 7.2 H15.4 M3 12.2 H14" stroke="#2b2e33" stroke-width="2.2" stroke-linecap="round"/>
  </svg>
  <svg class="a" style="left:607px;top:180px" width="18" height="19" viewBox="0 0 18 19">
    <path d="M1.4 4.4 H16.6 M6 4.2 V2.8 Q6 1.4 7.4 1.4 H10.6 Q12 1.4 12 2.8 V4.2" fill="none" stroke="#2b2e33" stroke-width="1.8" stroke-linecap="round"/>
    <path d="M3 4.6 L4.2 15.8 Q4.4 17.6 6.2 17.6 H11.8 Q13.6 17.6 13.8 15.8 L15 4.6" fill="none" stroke="#2b2e33" stroke-width="1.9"/>
    <path d="M7.4 8.2 V13.4 M10.6 8.2 V13.4" stroke="#2b2e33" stroke-width="1.6"/>
  </svg>
  <svg class="a" style="left:647px;top:187px" width="20" height="6" viewBox="0 0 20 6"><circle cx="3.4" cy="3" r="2.3" fill="#2b2e33"/><circle cx="9.9" cy="3" r="2.3" fill="#2b2e33"/><circle cx="16.4" cy="3" r="2.3" fill="#2b2e33"/></svg>
  <!-- card content -->
  <div class="a" style="left:262px;top:553px;font-size:25.5px;line-height:30px;font-weight:bold;color:#c73b6c;letter-spacing:1.4px;-webkit-text-stroke:0.35px #c73b6c">Dubai</div>
  <div class="a" style="left:262px;top:603px;font-size:19.6px;line-height:24px;color:#222;letter-spacing:-0.1px">UAE</div>
  <svg class="a" style="left:262px;top:649px" width="134" height="22" viewBox="0 0 134 22">
    <defs><path id="st" d="M10.60 -0.10 L13.77 6.53 L21.06 7.50 L15.74 12.57 L17.07 19.80 L10.60 16.30 L4.13 19.80 L5.46 12.57 L0.14 7.50 L7.43 6.53 Z" stroke-linejoin="round"/></defs>
    <use href="#st" fill="#ffa100"/>
    <use href="#st" x="27.3" fill="#ffa100"/>
    <use href="#st" x="54.8" fill="#ffa100"/>
    <use href="#st" x="82.1" fill="#ffa100"/>
    <use href="#st" x="109.5" fill="#808080"/>
  </svg>
  <div class="a" style="left:262px;top:699px;font-size:19.8px;line-height:24.3px;color:#3a3a3a;letter-spacing:1.12px;white-space:nowrap">Dubai is a dazzling metropolis known for<br>its futuristic skyline, luxurious shopping...</div>
  <div class="a" style="left:262px;top:795px;font-size:22.6px;line-height:28px;font-weight:bold;color:#c73b6c;letter-spacing:1.45px;-webkit-text-stroke:0.3px #c73b6c;white-space:nowrap">From &pound;699pp</div>
  <div class="a" style="left:263px;top:849px;width:177px;height:66px;background:#54bcc8;border-radius:6px"></div>
  <div class="a" style="left:263px;top:869px;width:177px;text-align:center;font-size:23.5px;line-height:28px;color:#fff;letter-spacing:0.8px">View Offer</div>
  <div class="a" style="left:115px;top:870px;width:157px;height:61px;background:#54bcc8;border-radius:6px"></div>
  <div class="a" style="left:115px;top:887px;width:157px;text-align:center;font-size:23.5px;line-height:28px;color:#fff;letter-spacing:0.8px">Saved Trips</div>
  <!-- add section -->
  <div class="a" style="left:993px;top:942px;width:10px;height:8px;border:1.5px solid #1a86f7;background:#fff"></div>
  <div class="a" style="left:896px;top:949px;width:204px;height:40px;background:#1c8cf7;border-radius:16px 16px 0 0"></div>
  <div class="a" style="left:896px;top:957px;width:204px;text-align:center;font-size:18px;line-height:22px;color:#fff;letter-spacing:0.3px">+ Add Section</div>
</div>

<!-- PANEL -->
<div id="panel" class="a">

  <div class="a" style="left:0;top:40px;width:380px;height:1px;background:#dcdcdc"></div>
  <svg class="a" style="left:11px;top:13px" width="16" height="16" viewBox="0 0 16 16">
    <rect x="1.4" y="1.4" width="13" height="12.6" rx="1.6" fill="none" stroke="#3c4a52" stroke-width="1.3"/>
    <path d="M10.2 3.4 V4.6 M10.2 6.8 V8 M10.2 10.2 V11.4" stroke="#3c4a52" stroke-width="1.3"/>
  </svg>
  <div class="a" style="left:335px;top:12px;font-size:16px;line-height:18px;color:#555b62">?</div>
  <svg class="a" style="left:357px;top:14px" width="15" height="15" viewBox="0 0 15 15"><path d="M1.2 1.2 L13.8 13.8 M13.8 1.2 L1.2 13.8" stroke="#4a5058" stroke-width="1.3"/></svg>
  <div class="a" style="left:30px;top:69px;font-size:15px;line-height:18px;color:#353b42;letter-spacing:0.35px">Section</div>
  <svg class="a" style="left:100px;top:71px" width="9" height="14" viewBox="0 0 9 14"><path d="M2 1.6 L7 7 L2 12.4" fill="none" stroke="#3a4048" stroke-width="1.5"/></svg>
  <div class="a" style="left:124px;top:69px;font-size:15px;line-height:18px;color:#353b42;letter-spacing:0.35px">Column</div>
  <svg class="a" style="left:195px;top:71px" width="9" height="14" viewBox="0 0 9 14"><path d="M2 1.6 L7 7 L2 12.4" fill="none" stroke="#3a4048" stroke-width="1.5"/></svg>
  <div class="a" style="left:21px;top:103px;font-size:19.2px;line-height:22px;font-weight:bold;color:#20252d;letter-spacing:0.5px;white-space:nowrap">Travelgenix - Carousel</div>

  <div class="card" style="top:148px;height:61px">
    <svg class="a" style="left:24px;top:24px" width="9" height="14" viewBox="0 0 9 14"><path d="M2.2 1.8 L6.8 6.6 L2.2 11.4" fill="none" stroke="#3a4048" stroke-width="1.3"/></svg>
    <div class="ttl" style="top:20px">Alignment</div>
  </div>
  <div class="card" style="top:230px;height:61px">
    <svg class="a" style="left:24px;top:24px" width="9" height="14" viewBox="0 0 9 14"><path d="M2.2 1.8 L6.8 6.6 L2.2 11.4" fill="none" stroke="#3a4048" stroke-width="1.3"/></svg>
    <div class="ttl" style="top:20px">Spacing</div>
  </div>
  <div class="card" style="top:311px;height:61px">
    <svg class="a" style="left:24px;top:24px" width="9" height="14" viewBox="0 0 9 14"><path d="M2.2 1.8 L6.8 6.6 L2.2 11.4" fill="none" stroke="#3a4048" stroke-width="1.3"/></svg>
    <div class="ttl" style="top:20px">Size</div>
    <svg class="a" style="left:90px;top:22px" width="18" height="18" viewBox="0 0 18 18"><circle cx="9" cy="9" r="7.6" fill="none" stroke="#2e343c" stroke-width="1.3"/><circle cx="9" cy="5.6" r="1" fill="#2e343c"/><path d="M9 7.8 V12.8" stroke="#2e343c" stroke-width="1.5"/></svg>
  </div>
  <div class="card" style="top:393px;height:61px">
    <svg class="a" style="left:24px;top:24px" width="9" height="14" viewBox="0 0 9 14"><path d="M2.2 1.8 L6.8 6.6 L2.2 11.4" fill="none" stroke="#3a4048" stroke-width="1.3"/></svg>
    <div class="ttl" style="top:20px">Animation</div>
  </div>
  <div class="card" style="top:474px;height:61px">
    <svg class="a" style="left:24px;top:24px" width="9" height="14" viewBox="0 0 9 14"><path d="M2.2 1.8 L6.8 6.6 L2.2 11.4" fill="none" stroke="#3a4048" stroke-width="1.3"/></svg>
    <div class="ttl" style="top:20px">Position</div>
  </div>
  <div class="a" style="left:21px;top:556px;width:339px;height:101px;background:#fff;border:1px solid #cfd2d6;border-radius:4px"></div>
  <svg class="a" style="left:46px;top:574px" width="24" height="24" viewBox="0 0 24 24"><circle cx="12" cy="12" r="11.2" fill="#4a8cf0"/><circle cx="12" cy="7" r="1.4" fill="#fff"/><path d="M12 10 V17.4" stroke="#fff" stroke-width="2"/></svg>
  <div class="a" style="left:83px;top:574px;font-size:15.6px;line-height:23px;color:#2b3036;letter-spacing:0.75px">This widget is<br>connected to a<br>collection.</div>
  <div class="a" style="left:246px;top:572px;width:92px;height:31px;border:1.4px solid #50555c;border-radius:16px"></div>
  <div class="a" style="left:246px;top:579px;width:92px;text-align:center;font-size:15px;line-height:18px;color:#50555c;letter-spacing:0.6px;-webkit-text-stroke:0.3px #50555c">Edit</div>

  <div class="card" style="top:678px;height:69px">
    <div class="a" style="left:20px;top:25px;font-size:16px;line-height:19px;color:#2b3036;letter-spacing:0.45px;white-space:nowrap">Carousel Background</div>
    <svg class="a" style="left:285px;top:18px" width="34" height="34" viewBox="0 0 34 34"><circle cx="17" cy="17" r="15.6" fill="#f4f5f6" stroke="#d6d9dc" stroke-width="1"/><circle cx="17" cy="17" r="9.2" fill="none" stroke="#4a5e62" stroke-width="1.6"/><path d="M10.6 23.4 L23.4 10.6" stroke="#4a5e62" stroke-width="1.6"/></svg>
  </div>
  <div class="a" style="left:21px;top:762px;font-size:16px;line-height:19px;color:#2b3036;letter-spacing:0.2px;white-space:nowrap">Rotation Enable</div>
  <div class="a" style="left:324px;top:761px;width:36px;height:23px;border-radius:12px;background:#8a8d92"></div>
  <div class="a" style="left:325px;top:762px;width:21px;height:21px;border-radius:50%;background:#fff"></div>

  <div class="card" style="top:817px;height:85px;border-radius:6px 6px 0 0">
    <div class="a" style="left:0;top:34px;width:339px;text-align:center;font-size:16.5px;line-height:19px;font-weight:bold;color:#2b3036;letter-spacing:-0.35px;white-space:nowrap">Card Container Border Radius</div>
    <div class="a" style="left:20px;top:68px;font-size:16px;line-height:19px;color:#2b3036;letter-spacing:0.2px;white-space:nowrap">Corner radius</div>
    <svg class="a" style="left:127px;top:68px" width="20" height="20" viewBox="0 0 20 20"><path d="M10 1.8 L12 3.6 L14.6 3.2 L15.4 5.8 L17.8 7 L17 9.6 L18.2 12 L15.8 13.4 L15.2 16 L12.6 16 L10 17.8 L7.8 16 L5 16.2 L4.4 13.6 L2 12.2 L3 9.8 L2 7.2 L4.6 6 L5.2 3.4 L7.8 3.8 Z" fill="none" stroke="#4a5a5e" stroke-width="1.5" stroke-linejoin="round"/><circle cx="10" cy="10" r="2.8" fill="none" stroke="#4a5a5e" stroke-width="1.5"/></svg>
  </div>
</div>

<!-- ARROW -->
<svg class="a" style="left:0;top:0;z-index:20" width="1920" height="975">
  <path d="M-20 270 C60 410 160 388 214 389" fill="none" stroke="#fbad22" stroke-width="20" stroke-linecap="round"/>
  <path d="M171.2 342.3 L215.6 387.6 L171.2 431.5" fill="none" stroke="#fbad22" stroke-width="19" stroke-linecap="round" stroke-linejoin="round"/>
</svg>
</body></html>
